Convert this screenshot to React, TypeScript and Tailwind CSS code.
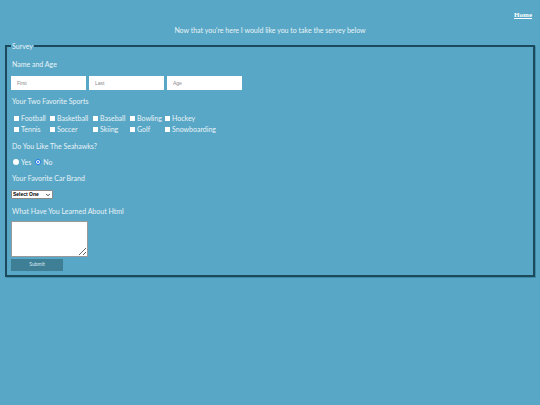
import { ChevronDown } from "lucide-react";

const sports = [
  ["Football", "Basketball", "Baseball", "Bowling", "Hockey"],
  ["Tennis", "Soccer", "Skiing", "Golf", "Snowboarding"],
];

function Box() {
  return <span className="inline-block h-[5px] w-[5px] bg-white shrink-0" />;
}

function Radio({ checked }: { checked?: boolean }) {
  return checked ? (
    <span className="inline-block h-[6px] w-[6px] rounded-full border border-[#1a73e8] bg-white p-[1px]">
      <span className="block h-full w-full rounded-full bg-[#1a73e8]" />
    </span>
  ) : (
    <span className="inline-block h-[6px] w-[6px] rounded-full bg-white" />
  );
}

export default function App() {
  return (
    <div className="min-h-[405px] w-[540px] bg-[#58a7c6] text-[#e8f3f7] font-['Lato','Noto_Sans',sans-serif]">
      <nav className="flex justify-end px-[8px] pt-[10px] h-[24px]">
        <a className="font-['Liberation_Serif',serif] font-bold text-[7px] text-white underline">Home</a>
      </nav>
      <p className="text-center text-[7px] leading-[12px]">
        Now that you're here I would like you to take the servey below
      </p>

      <form className="px-[5px] mt-[6px]">
        <fieldset className="border-2 border-[#1b4a5d] shadow-[1px_1px_0_#3f8aa6] px-[5px] pb-[4px]">
          <legend className="text-[7px] leading-[8px] px-[1px] -ml-[1px]">Survey</legend>

          <div className="text-[7px] mt-[9px] leading-[10px]">Name and Age</div>
          <div className="flex gap-[3px] mt-[7px] -ml-[1px]">
            {["First", "Last", "Age"].map((p) => (
              <input
                key={p}
                placeholder={p}
                className="w-[75px] h-[14px] bg-white px-[6px] text-[5px] text-gray-700 placeholder:text-[#8a8a8a] font-['Liberation_Sans',sans-serif] outline-none"
              />
            ))}
          </div>

          <div className="text-[7px] mt-[6px] leading-[10px]">Your Two Favorite Sports</div>
          <div className="grid grid-cols-[36px_43px_37px_35px_auto] ml-[2px] mt-[7px] gap-y-[1px]">
            {sports.flat().map((s) => (
              <label key={s} className="flex items-center gap-[2px] text-[7px] leading-[10px]">
                <Box />
                {s}
              </label>
            ))}
          </div>

          <div className="text-[7px] mt-[7px] leading-[10px]">Do You Like The Seahawks?</div>
          <div className="flex items-center gap-[4px] mt-[6px] ml-[1px] text-[7px] leading-[10px]">
            <label className="flex items-center gap-[2px]">
              <Radio />
              Yes
            </label>
            <label className="flex items-center gap-[2px]">
              <Radio checked />
              No
            </label>
          </div>

          <div className="text-[7px] mt-[6px] leading-[10px]">Your Favorite Car Brand</div>
          <div className="mt-[7px] -ml-[1px] flex h-[9px] w-[42px] items-center justify-between bg-white border border-[#8a8a8a] rounded-[1px] px-[1px] text-[5px] font-bold text-black font-['Liberation_Sans',sans-serif]">
            Select One
            <ChevronDown size={6} strokeWidth={3} />
          </div>

          <div className="text-[7px] mt-[7px] leading-[10px]">What Have You Learned About Html</div>
          <textarea className="block mt-[5px] -ml-[1px] w-[77px] h-[36px] bg-white border border-[#9a9a9a] resize-y outline-none" />
          <button
            type="button"
            className="block mt-[2px] -ml-[1px] w-[52px] h-[12px] bg-[#3f7f96] text-[5px] text-[#dcecf2] font-['Lato',sans-serif]"
          >
            Submit
          </button>
        </fieldset>
      </form>
    </div>
  );
}
